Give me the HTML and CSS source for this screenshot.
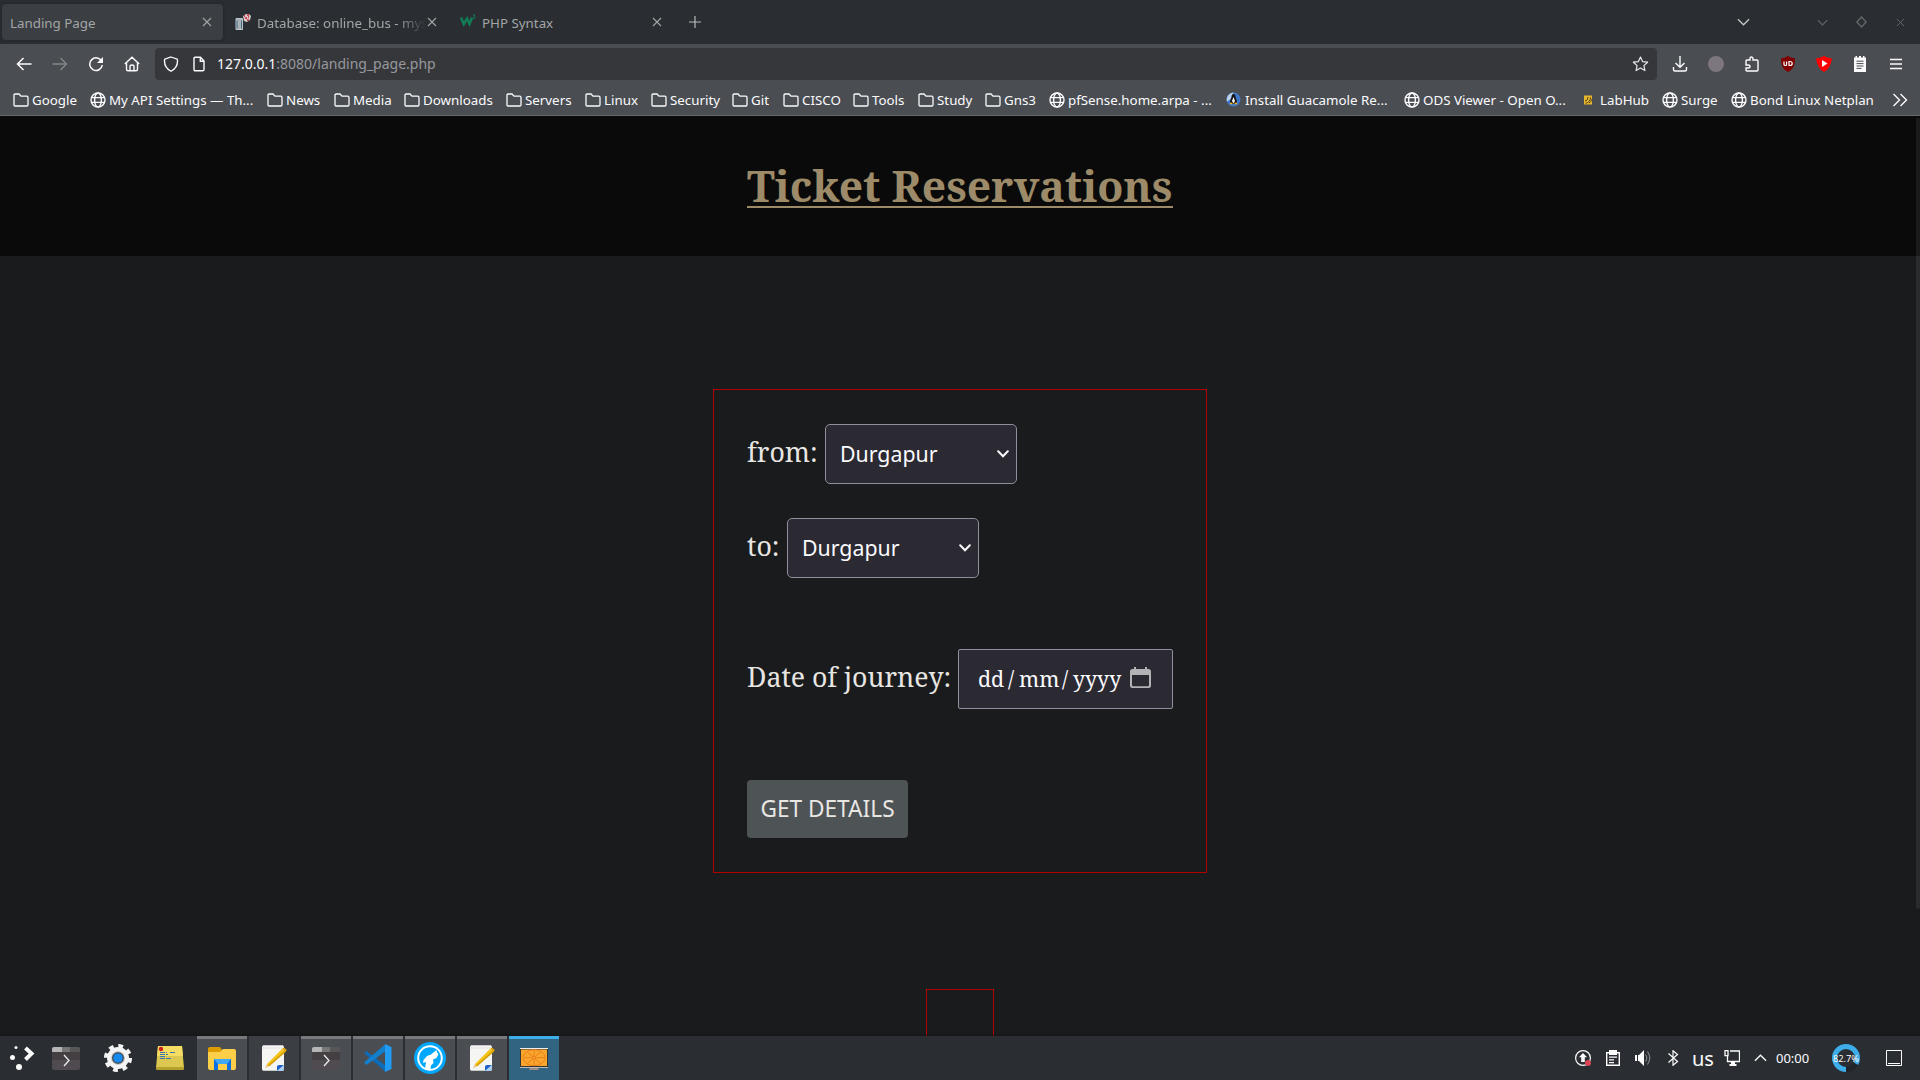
FILE: index.html
```html
<!DOCTYPE html>
<html lang="en">
<head>
<meta charset="utf-8">
<title>Landing Page</title>
<link rel="stylesheet" href="styles.css">
</head>
<body>
<svg class="defs" width="0" height="0">
  <symbol id="folder" viewBox="0 0 16 16"><path d="M1 3.200Q1 2 2.200 2H6l2 2.200h5.800Q15 4.200 15 5.400V12.800Q15 14 13.800 14H2.200Q1 14 1 12.800Z" fill="none" stroke="#fbfbfe" stroke-width="1.300"/></symbol>
  <symbol id="globe" viewBox="0 0 16 16"><g fill="none" stroke="#fbfbfe" stroke-width="1.400"><circle cx="8" cy="8" r="7"/><ellipse cx="8" cy="8" rx="3.400" ry="7"/><path d="M1.500 5.600h13M1.500 10.400h13"/></g></symbol>
  <symbol id="cross" viewBox="0 0 10 10"><path d="M1 1l8 8M9 1l-8 8" fill="none" stroke="currentColor" stroke-width="1.100"/></symbol>
  <symbol id="chev" viewBox="0 0 14 8"><path d="M1 1l6 6 6-6" fill="none" stroke="currentColor" stroke-width="1.400"/></symbol>
  <symbol id="drop" viewBox="0 0 12 8"><path d="M1.200 1.200L6 6.200l4.800-5" fill="none" stroke="currentColor" stroke-width="2" stroke-linecap="round"/></symbol>
  <symbol id="term" viewBox="0 0 28 24"><path d="M0 3q0-2 2-2h24q2 0 2 2v19q0 2-2 2H2q-2 0-2-2z" fill="#504b50"/><path d="M0 6h28v8H0z" fill="#433f43"/><path d="M0 3q0-2 2-2h8v5H0z" fill="#b5b5b5"/><path d="M10 1h8v5h-8z" fill="#777"/><path d="M18 1h8q2 0 2 2v3H18z" fill="#575757"/><path d="M12 9l5 5.500-5 5.500" fill="none" stroke="#eee" stroke-width="1.300"/></symbol>
  <symbol id="note" viewBox="0 0 28 28"><rect x="2" y="1" width="22" height="26" rx="2.500" fill="#f5f5f3"/><path d="M4 1.500h18M3 26.500h20" stroke="#c6c9cc"/><path d="M3 4h20" stroke="#ccc" stroke-dasharray="1 1"/><path d="M17 27v-4q0-2 2-2h5z" fill="#1d5fc4"/><path d="M24 21v4q0 2-2 2h-5z" fill="#a9cdf2"/><path d="M5.500 24l1.500-4L22 5l3.500 3L9 22z" fill="#f4c417"/><path d="M8.500 22L25 7.500" stroke="#cf9a00" stroke-width="1.500"/><path d="M5 24.500l1.700-4 2 1.800z" fill="#e8c9a0"/><path d="M22 5l1.800-1.500 3 2.600L25.500 8z" fill="#e2a90a"/></symbol>
</svg>

<div class="tabs">
  <div class="tab active"><span class="label t-landing">Landing Page</span><svg class="x"><use href="#cross"/></svg></div>
  <div class="tab second">
    <svg class="fav" viewBox="0 0 16 16"><path d="M1 4.500h6.500V15.500H1z" fill="#aab2b7" stroke="#b9c4ca"/><path d="M2 6.500v8M6.500 6.500v8" stroke="#3f6b82"/><path d="M8 2l3-2h3l2 2-1 4-3 2-3-1z" fill="#d9c8ca"/><path d="M9 2h1M12 1h2M10 4h2M13 3h1M12 6h2" stroke="#c21f2b" stroke-width="1.300"/></svg>
    <span class="label fade t-db">Database: online_bus - mys</span><svg class="x"><use href="#cross"/></svg></div>
  <div class="tab third">
    <svg class="fav" viewBox="0 0 16 16"><path d="M1 3.500l2.800 6.500L7 4.500 9.500 10 12 3.500" fill="none" stroke="#127a55" stroke-width="2.600"/><path d="M13 1h2l-1 1.500q1.500.3 1 1.500-.6 1-2 .4" fill="none" stroke="#127a55"/></svg>
    <span class="label t-php">PHP Syntax</span><svg class="x"><use href="#cross"/></svg></div>
  <svg class="plus" viewBox="0 0 12 12"><path d="M6 0v12M0 6h12" stroke="#b8babb" stroke-width="1.200"/></svg>
  <div class="winctl">
    <svg class="w1"><use href="#chev"/></svg>
    <svg class="w2"><use href="#chev"/></svg>
    <svg class="w3" viewBox="0 0 12 12"><path d="M6 1l4.600 5L6 11 1.400 6z" fill="none" stroke="currentColor" stroke-width="1.400"/></svg>
    <svg class="w4"><use href="#cross"/></svg>
  </div>
</div>

<div class="nav">
  <div class="navbtns">
    <svg viewBox="0 0 16 16"><path d="M15.500 8H1.500M7.500 2L1.500 8l6 6" fill="none" stroke="#fbfbfe" stroke-width="1.500"/></svg>
    <svg viewBox="0 0 16 16"><path d="M.5 8h14M8.500 2l6 6-6 6" fill="none" stroke="#85888b" stroke-width="1.300"/></svg>
    <svg viewBox="0 0 16 16"><path d="M13.800 5.600A6.300 6.300 0 1 0 14.300 9" fill="none" stroke="#fbfbfe" stroke-width="1.500"/><path d="M15 1v6H9z" fill="#fbfbfe"/></svg>
    <svg viewBox="0 0 16 16"><path d="M.8 8L8 1.200 15.200 8M2.500 6.800V13q0 1.800 1.500 1.800h8q1.500 0 1.500-1.800V6.800M6 14.500v-4q0-1.500 2-1.500t2 1.500v4" fill="none" stroke="#fbfbfe" stroke-width="1.400"/></svg>
  </div>
  <div class="urlbar">
    <svg class="shield" viewBox="0 0 16 16"><path d="M8 1l6 2.200Q15.200 11 8 15.300.8 11 2 3.200z" transform="translate(-.4 0) scale(1.05 1)" fill="none" stroke="#fbfbfe" stroke-width="1.300"/></svg>
    <svg class="doc" viewBox="0 0 12 16"><path d="M1 2.500Q1 1.300 2.200 1.300H7.500L11 5v8.500q0 1.200-1.200 1.200H2.200Q1 14.700 1 13.500z M7.300 1.500V5.200H11" fill="none" stroke="#fbfbfe" stroke-width="1.400"/></svg>
    <span class="url"><b>127.0.0.1</b>:8080/landing_page.php</span>
    <svg class="star" viewBox="0 0 16 16"><path d="M8 1l2.100 4.600 5 .6-3.700 3.400 1 5L8 12.100l-4.400 2.500 1-5L.9 6.200l5-.6z" fill="none" stroke="#e8e8ea" stroke-width="1.200" stroke-linejoin="round"/></svg>
  </div>
  <div class="ext">
    <svg viewBox="0 0 16 16"><path d="M8 0v11M3.500 7L8 11.300 12.500 7M1.500 11v2.500q0 1.500 1.500 1.500h10q1.500 0 1.500-1.500V11" fill="none" stroke="#fbfbfe" stroke-width="1.400"/></svg>
    <svg viewBox="0 0 16 16"><circle cx="8" cy="8" r="8" fill="#7d757f"/></svg>
    <svg viewBox="0 0 16 16"><path d="M2 6V5q0-1 1-1h3V2.800Q6 1 7.500 1T9 2.800V4h4q1 0 1 1v9q0 1-1 1H3q-1 0-1-1v-2h2q2 0 2-1.500T4 9H2z" fill="none" stroke="#fbfbfe" stroke-width="1.400"/></svg>
    <svg viewBox="0 0 16 16"><path d="M8 0q3.500 2.300 7 2.300Q15.500 12.500 8 16 .5 12.500 1 2.300 4.500 2.300 8 0z" fill="#800000"/><path d="M4 5.500v3q0 1 1.300 1t1.300-1v-3M9 5.500h1q2.200 0 2.200 2t-2.200 2H9z" fill="none" stroke="#fff" stroke-width="1.200"/></svg>
    <svg viewBox="0 0 16 16"><path d="M8 0q4 2 8 2.500Q14.500 12.500 8 16 1.500 12.500 0 2.500 4 2 8 0z" fill="#f00"/><path d="M6 4l5.500 3.500L6 11z" fill="#fff"/></svg>
    <svg viewBox="0 0 16 16"><path d="M2 1.500h1.500V0h1.500v1.500h2V0h2v1.500h2V0h1.500v1.500H14V16H2z" fill="#fbfbfe"/><path d="M4.500 5.200h7M4.500 7.600h7M4.500 10h7M4.500 12.400h5" stroke="#4a4c50"/></svg>
    <svg viewBox="0 0 16 16"><path d="M2 3.500h12M2 8h12M2 12.500h12" stroke="#fbfbfe" stroke-width="1.400"/></svg>
  </div>
</div>

<div class="marks">
  <div><svg><use href="#folder"/></svg>Google</div>
  <div><svg><use href="#globe"/></svg>My API Settings — Th...</div>
  <div><svg><use href="#folder"/></svg>News</div>
  <div><svg><use href="#folder"/></svg>Media</div>
  <div><svg><use href="#folder"/></svg>Downloads</div>
  <div><svg><use href="#folder"/></svg>Servers</div>
  <div><svg><use href="#folder"/></svg>Linux</div>
  <div><svg><use href="#folder"/></svg>Security</div>
  <div><svg><use href="#folder"/></svg>Git</div>
  <div><svg><use href="#folder"/></svg>CISCO</div>
  <div><svg><use href="#folder"/></svg>Tools</div>
  <div><svg><use href="#folder"/></svg>Study</div>
  <div><svg><use href="#folder"/></svg>Gns3</div>
  <div><svg><use href="#globe"/></svg>pfSense.home.arpa - ...</div>
  <div><svg viewBox="0 0 16 16"><circle cx="7.500" cy="7.500" r="7" fill="#3f78c8"/><path d="M7.500.5a7 7 0 0 0-6.500 9l5-3z" fill="#b9d0ec"/><path d="M7.500 2q2 0 2 3l1.500 4-1 3H5L4 9l1.500-4q0-3 2-3z" fill="#151515"/><path d="M7.500 5l1.500 4-1.500 2.500L6 9z" fill="#fff"/><path d="M4 11.500h2.500M8.500 11.500H11" stroke="#f2b71c" stroke-width="1.600"/></svg>Install Guacamole Re...</div>
  <div><svg><use href="#globe"/></svg>ODS Viewer - Open O...</div>
  <div class="lab"><svg viewBox="0 0 16 16"><path d="M1 3.500h8v9H1z" fill="#e8b72d"/><path d="M2 9q3 0 3-4M2.500 11.300q5-1 5-6M6 11q2-1 3-4" fill="none" stroke="#5c4a16"/></svg>LabHub</div>
  <div><svg><use href="#globe"/></svg>Surge</div>
  <div><svg><use href="#globe"/></svg>Bond Linux Netplan</div>
  <div class="more"><svg viewBox="0 0 16 16"><path d="M1.500 2l6 6-6 6M8.500 2l6 6-6 6" fill="none" stroke="#fbfbfe" stroke-width="1.400"/></svg></div>
</div>

<main class="page">
  <header><h1>Ticket Reservations</h1></header>
  <div class="content">
    <form class="booking">
      <div class="row"><label class="l-from">from:</label><div class="select"><span>Durgapur</span><svg><use href="#drop"/></svg></div></div>
      <div class="row to"><label class="l-to">to:</label><div class="select"><span>Durgapur</span><svg><use href="#drop"/></svg></div></div>
      <div class="row date"><label class="l-date">Date of journey:</label>
        <div class="datebox"><span class="dd">dd</span><span class="sl">/</span><span class="mm">mm</span><span class="sl">/</span><span class="yy">yyyy</span>
        <svg viewBox="0 0 21 21"><path d="M4 0h2v2h9V0h2v2h1.500Q21 2 21 4.500v14Q21 21 18.500 21h-16Q0 21 0 18.500v-14Q0 2 2.500 2H4zM2 8v10q0 1.200 1.200 1.200h14.600q1.200 0 1.200-1.200V8z" fill="#b3b2b5" fill-rule="evenodd"/></svg></div></div>
      <button type="button" class="submit">GET DETAILS</button>
    </form>
    <div class="empty"></div>
  </div>
  <div class="scroll"></div>
</main>

<div class="taskbar">
  <div class="launch">
    <svg viewBox="0 0 28 28"><g fill="#fcfcfc"><circle cx="8" cy="3.500" r="1.500"/><circle cx="4.500" cy="13.500" r="2.500"/><circle cx="11" cy="23" r="3"/></g><path d="M17.500 4L23.500 9.600 17.500 15.500" fill="none" stroke="#fcfcfc" stroke-width="4"/></svg>
    <svg viewBox="0 0 28 28"><use href="#term" y="2" width="28" height="24"/></svg>
    <svg viewBox="0 0 28 28"><circle cx="14" cy="14" r="11.800" fill="none" stroke="#f4f4f4" stroke-width="4.500" stroke-dasharray="4.600 4.660"/><circle cx="14" cy="14" r="11" fill="#f4f4f4"/><circle cx="14" cy="14" r="6.800" fill="#b9b9b9"/><circle cx="14" cy="14" r="5.800" fill="#333"/><circle cx="14" cy="14" r="4.800" fill="#178af0"/></svg>
    <svg viewBox="0 0 28 28"><path d="M2 2h24l2 22q0 2-2 2H2q-2 0-2-2z" fill="#dcc750"/><path d="M2 2h24l1 10H1z" fill="#f5dc62"/><path d="M0 23h28v1q0 2-2 2H2q-2 0-2-2z" fill="#b5a02c"/><circle cx="5" cy="5" r="2.200" fill="#d11f1f"/><path d="M4 8.500h7M14 8.500h6M4 10.500h8M4 12.500h6M4 14.500h12" stroke="#3a76b0" stroke-dasharray="5 1"/></svg>
  </div>
  <div class="tasks">
    <div class="task"><svg viewBox="0 0 28 28"><path d="M0 5q0-2 2-2h10l2 3-2 4H0z" fill="#dd9c04"/><path d="M0 8h12l3-3h11q2 0 2 2v17q0 2-2 2H2q-2 0-2-2z" fill="#fdcf48"/><path d="M6 26V15h17v11h-4v-6h-9v6z" fill="#0d6fe0"/><path d="M6 15h17l-4 5h-9z" fill="#3fa8f5"/></svg></div>
    <div class="task quiet"><svg><use href="#note"/></svg></div>
    <div class="task"><svg viewBox="0 0 28 28"><use href="#term" y="2" width="28" height="24"/></svg></div>
    <div class="task"><svg viewBox="0 0 28 28"><path d="M0 9l2.500-2L21 21v6.500z" fill="#0f6bb5"/><path d="M0 18.500L21 .5v7L2.500 21z" fill="#1380ce"/><path d="M21 0l6.500 3v22L21 28z" fill="#219cf4"/></svg></div>
    <div class="task wolf"><svg viewBox="0 0 32 32"><circle cx="16" cy="16" r="16" fill="#00a7fb"/><circle cx="16" cy="16" r="11.800" fill="none" stroke="#fff" stroke-width="2"/><path d="M11 26.500L12 20l-3 1 .5-3L13 14l4-1.500L22.500 8l.5 2.500 1.500 1.500-2 4-3.500 1.500.5 3.500-2.500 2.500-.5 3.500q-2.500.8-5-.5z" fill="#fff"/></svg></div>
    <div class="task"><svg><use href="#note"/></svg></div>
    <div class="task current"><svg viewBox="0 0 28 28"><path d="M0 4h28v20H0z" fill="#333"/><path d="M0 4.500h28" stroke="#eee"/><path d="M1 5.500h26v16.500H1z" fill="#f9a72c"/><g fill="none" stroke="#ea7a1c" stroke-width=".9"><ellipse cx="14" cy="13.700" rx="11" ry="8"/><circle cx="14" cy="13.700" r="1.500"/><path d="M14 12V6M14 15.500v6M12.500 13.700H4M15.500 13.700H24M12.800 12.500L7.500 8M15.200 12.500L20.500 8M12.800 15l-5.300 4.500M15.200 15l5.300 4.500"/></g><path d="M0 23.500h28" stroke="#bbb"/><path d="M10 24h8l1 2H9z" fill="#9b8b84"/></svg></div>
  </div>
  <div class="tray">
    <svg class="y-up" viewBox="0 0 16 16"><circle cx="8" cy="8" r="7.400" fill="none" stroke="#fcfcfc" stroke-width="1.200"/><path d="M8 3l4 4.200H9.800V12H6.200V7.200H4z" fill="#fcfcfc"/><circle cx="13" cy="13" r="3" fill="#da4453"/></svg>
    <svg class="y-clip" viewBox="0 0 14 16"><path d="M.7 2.700h12.600v12.600H.7z" fill="none" stroke="#fcfcfc" stroke-width="1.400"/><path d="M3 0h8v5H3zM3 6.500h8v1.200H3zM3 9.300h5v1.200H3zM3 12h5v1.200H3z" fill="#fcfcfc"/></svg>
    <svg class="y-vol" viewBox="0 0 16 16"><path d="M0 5h2v6H0zM3 5h1l5-5v16l-5-5H3z" fill="#fcfcfc"/><path d="M10.500 4.500q2.500 3.500 0 7M12.500 1.500q4.500 6.500 0 13" fill="none" stroke="#818487" stroke-width="1.200"/></svg>
    <svg class="y-bt" viewBox="0 0 12 16"><path d="M1.500 3.500l9 8L6 15.300V.7l4.500 3.800-9 8" fill="none" stroke="#fcfcfc" stroke-width="1.200"/></svg>
    <span class="y-us">us</span>
    <svg class="y-net" viewBox="0 0 16 16"><path d="M6 1h9.500v10.500H3.500V6M1 .7h3v5H1zM3.500 8v3.500" fill="none" stroke="#fcfcfc" stroke-width="1.300"/><path d="M7 12h4v2h1.500v2h-7v-2H7z" fill="#fcfcfc"/></svg>
    <svg class="y-caret"><use href="#chev"/></svg>
    <span class="y-time">00:00</span>
    <div class="y-ring"><svg viewBox="0 0 28 28"><circle cx="14" cy="14" r="11.500" fill="none" stroke="#222529" stroke-width="5"/><circle cx="14" cy="14" r="11.500" fill="none" stroke="#3daee9" stroke-width="5" stroke-dasharray="59.800 100" transform="rotate(90 14 14)"/></svg><span>82.7%</span></div>
    <svg class="y-desk" viewBox="0 0 16 16"><path d="M.5.5h15v15H.5zM2 13.500h12" fill="none" stroke="#fcfcfc"/></svg>
  </div>
</div>
</body>
</html>
```

FILE: styles.css
```css
* { box-sizing: border-box; }
body { margin: 0; width: 1920px; height: 1080px; overflow: hidden; display: flex; flex-direction: column; background: #1a1b1c; font-family: "Noto Sans", sans-serif; color: #fbfbfe; white-space: nowrap; }
svg { display: block; flex: none; }
.defs { position: absolute; }

.tabs { height: 44px; flex: none; background: #2a2e32; display: flex; align-items: center; padding-left: 2px; font-size: 13.330px; color: #a3a5a7; }
.tab { height: 36px; display: flex; align-items: center; border-radius: 4px; padding-top: 2px; }
.tab .label { flex: 1; }
.tab .x { width: 10px; height: 10px; margin-top: -3px; }
.tab.active { width: 221px; background: #3b3e42; padding-left: 8px; padding-right: 11px; box-shadow: 0 0 3px #1f2226; }
.tab.second { width: 225px; padding-left: 12px; padding-right: 11px; }
.tab.third { width: 225px; padding-left: 12px; padding-right: 11px; }
.fav { width: 16px; height: 16px; margin-right: 6px; margin-top: -3px; }
.fade { width: 0; -webkit-mask-image: linear-gradient(90deg, #000 82%, transparent); mask-image: linear-gradient(90deg, #000 82%, transparent); }
.plus { width: 12px; height: 12px; margin-left: 16px; }
.winctl { margin-left: auto; display: flex; align-items: center; margin-right: 15px; color: #63676a; }
.w1 { width: 13px; height: 8px; color: #c5c6c8; margin-right: 67px; }
.w2 { width: 11px; height: 7px; margin-right: 27px; }
.w3 { width: 13px; height: 12px; margin-right: 28px; }
.w4 { width: 9px; height: 9px; }

.nav { height: 40px; flex: none; background: #4a4d51; display: flex; align-items: center; padding-right: 16px; }
.navbtns { display: flex; gap: 20px; width: 155px; padding-left: 16px; }
.navbtns svg, .ext svg { width: 16px; height: 16px; }
.urlbar { width: 1502px; height: 32px; border-radius: 4px; background: #36373b; display: flex; align-items: center; padding: 0 8px; }
.shield { width: 16px; height: 16px; }
.doc { width: 12px; height: 16px; margin-left: 14px; }
.url { margin: -1px 0 0 12px; font-size: 14px; color: #97989b; flex: 1; }
.url b { font-weight: 400; color: #fbfbfe; }
.star { width: 17px; height: 16px; }
.ext { flex: 1; display: flex; justify-content: space-between; padding-left: 15px; }

.marks { height: 32px; flex: none; background: #4a4d51; border-bottom: 1px solid #67696c; display: grid; align-items: center; padding-left: 13px; font-size: 13.330px;
  grid-template-columns: 77px 177px 67px 70px 102px 79px 66px 81px 51px 70px 65px 67px 64px 177px 178px 179px 79px 69px 161px 16px; }
.marks div { display: flex; align-items: center; gap: 3px; }
.marks svg { width: 16px; height: 16px; }
.marks .lab { gap: 1px; }

.page { height: 920px; flex: none; display: flex; flex-direction: column; position: relative; overflow: hidden; }
header { height: 140px; flex: none; background: #0a0a0a; display: flex; justify-content: center; padding-top: 38px; }
h1 { margin: 0; font: 700 42.670px/64px "Noto Serif", "DejaVu Serif Condensed", serif; width: 426px; height: 54px; color: #9c8a69; border-bottom: 2px solid #9c8a69; }
.content { display: flex; flex-direction: column; align-items: center; }
.booking { margin-top: 133px; width: 494px; height: 484px; border: 1px solid #b00000; padding: 34px 33px; flex: none; }
.row { display: flex; height: 60px; font: 26.670px/55px "Noto Serif", "DejaVu Serif Condensed", serif; color: #e8e6e3; }
.to { margin-top: 34px; }
.date { margin-top: 71px; }
.l-from { width: 78px; }
.l-to { width: 40px; }
.l-date { width: 211px; }
.select { width: 192px; height: 60px; border: 1px solid #8f8f9d; border-radius: 5px; background: #2b2a33; color: #fbfbfe; display: flex; align-items: center; justify-content: space-between; padding: 0 7px 0 14px; font: 21.330px/57px "Noto Sans", sans-serif; }
.select svg { width: 12px; height: 8px; }
.select span { margin-top: -1px; }
.datebox { width: 215px; height: 60px; border: 1px solid #8f8f9d; border-radius: 2px; background: #2b2a33; color: #fbfbfe; display: flex; align-items: center; padding-left: 19px; font-size: 21.330px; }
.datebox span { margin-top: -1px; }
.dd { width: 30px; } .mm { width: 43px; } .yy { width: 54px; } .sl { width: 11px; }
.datebox svg { width: 21px; height: 21px; margin-top: -3px; margin-left: 3px; }
.submit { display: block; margin-top: 71px; width: 161px; height: 58px; border: 0; border-radius: 4px; background: #4e5356; color: #e8e6e3; font: 22.670px/58px "Noto Sans", sans-serif; padding: 0; }
.empty { margin-top: 116px; width: 68px; height: 68px; border: 1px solid #b00000; flex: none; }
.scroll { position: absolute; right: 0; top: 2px; width: 4px; height: 791px; background: rgba(255, 255, 255, .07); border-radius: 2px; }

.taskbar { height: 44px; flex: none; background: #2a2e32; display: flex; box-shadow: 0 0 3px #101112; position: relative; }
.launch { display: flex; width: 197px; padding: 8px 0 0 8px; gap: 24px; }
.launch svg { width: 28px; height: 28px; }
.launch svg:first-child { width: 28px; margin-right: -8px; }
.tasks { display: flex; gap: 2px; }
.task { width: 50px; height: 44px; background: #4a4d51; border-top: 3px solid #77797c; padding: 5px 0 0 11px; }
.task svg { width: 28px; height: 28px; }
.quiet { background: #3b3f44; border-color: #3b3f44; }
.current { background: #306480; border-color: #3daee9; }
.wolf { padding: 3px 0 0 9px; }
.wolf svg { width: 32px; height: 32px; }
.tray { margin-left: auto; width: 345px; display: flex; align-items: center; }
.y-up { width: 16px; height: 16px; }
.y-clip { width: 14px; height: 16px; margin-left: 15px; }
.y-vol { width: 16px; height: 16px; margin-left: 15px; }
.y-bt { width: 12px; height: 16px; margin-left: 16px; }
.y-us { width: 22px; margin-left: 13px; font-size: 20px; line-height: 44px; padding-top: 1px; }
.y-net { width: 16px; height: 16px; margin-left: 10px; }
.y-caret { width: 13px; height: 8px; margin-left: 14px; transform: rotate(180deg); }
.y-time { width: 34px; margin-left: 9px; font-size: 13px; }
.y-ring { width: 28px; height: 28px; margin-left: 22px; display: grid; place-items: center; }
.y-ring > * { grid-area: 1 / 1; }
.y-ring svg { width: 28px; height: 28px; }
.y-ring span { font-size: 9.300px; }
.y-desk { width: 16px; height: 16px; margin-left: 26px; }
```
